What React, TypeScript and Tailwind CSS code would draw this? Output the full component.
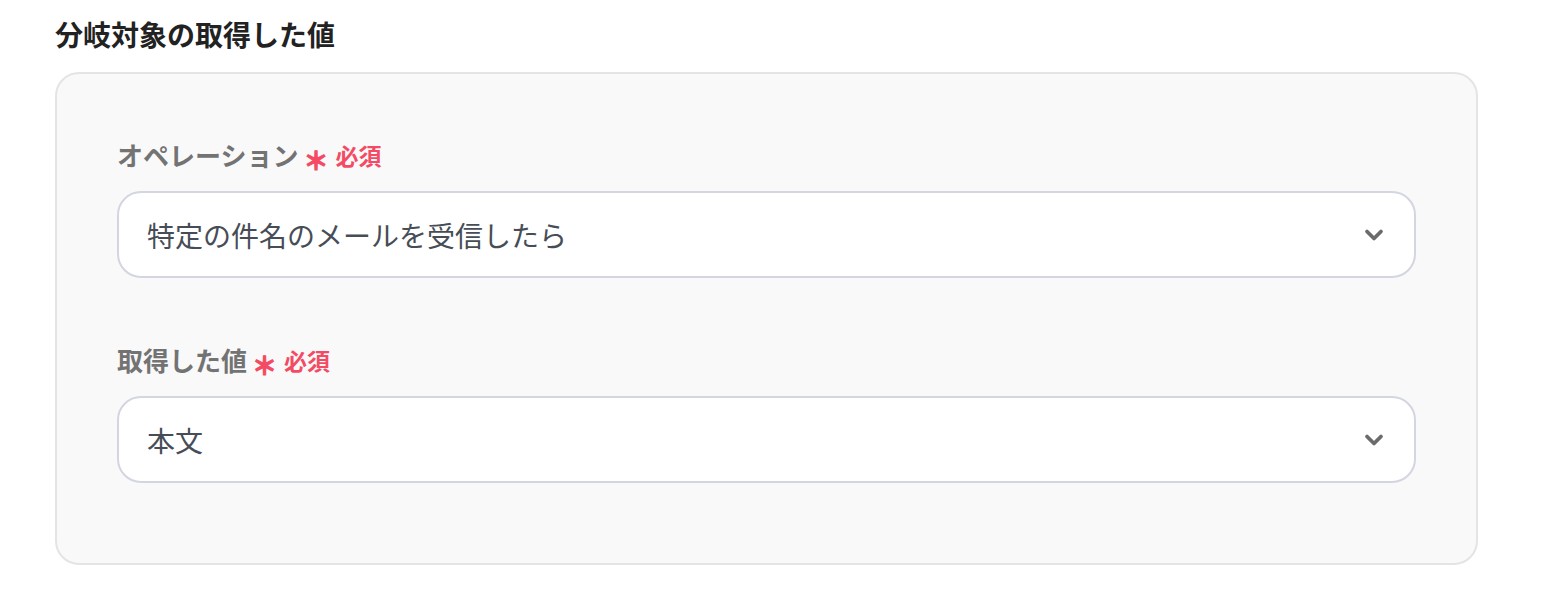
import { ChevronDown } from "lucide-react";

const font = {
  fontFamily: '"Noto Sans CJK JP", "Noto Sans", sans-serif',
};

function Label({ text }: { text: string }) {
  return (
    <div className="flex items-center h-[36px] mb-[18px]">
      <span className="text-[26px] font-bold text-[#737373] leading-none">{text}</span>
      <span className="ml-[5px] text-[25px] font-bold text-[#f44a64] leading-none translate-y-[4px] [-webkit-text-stroke:1.2px_#f44a64]">＊</span>
      <span className="ml-[7px] text-[23px] font-bold text-[#f44a64] leading-none">必須</span>
    </div>
  );
}

function Select({ value }: { value: string }) {
  return (
    <div className="flex items-center justify-between h-[87px] rounded-[24px] border-2 border-[#d3d6e0] bg-white pl-[28px] pr-[26px]">
      <span className="text-[28px] text-[#474d57]">{value}</span>
      <ChevronDown className="w-[28px] h-[28px] text-[#6b6b6b]" strokeWidth={3.2} />
    </div>
  );
}

export default function App() {
  return (
    <div style={font} className="w-[1546px] h-[602px] bg-white px-[55px] pt-[14px]">
      <h2 className="text-[28px] font-bold text-[#222222] leading-[40px]">分岐対象の取得した値</h2>
      <div className="mt-[18px] w-[1423px] rounded-[24px] border-2 border-[#e4e4e6] bg-[#f9f9fa] px-[60px] pt-[63px] pb-[80px]">
        <Label text="オペレーション" />
        <Select value="特定の件名のメールを受信したら" />
        <div className="h-[64px]" />
        <Label text="取得した値" />
        <Select value="本文" />
      </div>
    </div>
  );
}
